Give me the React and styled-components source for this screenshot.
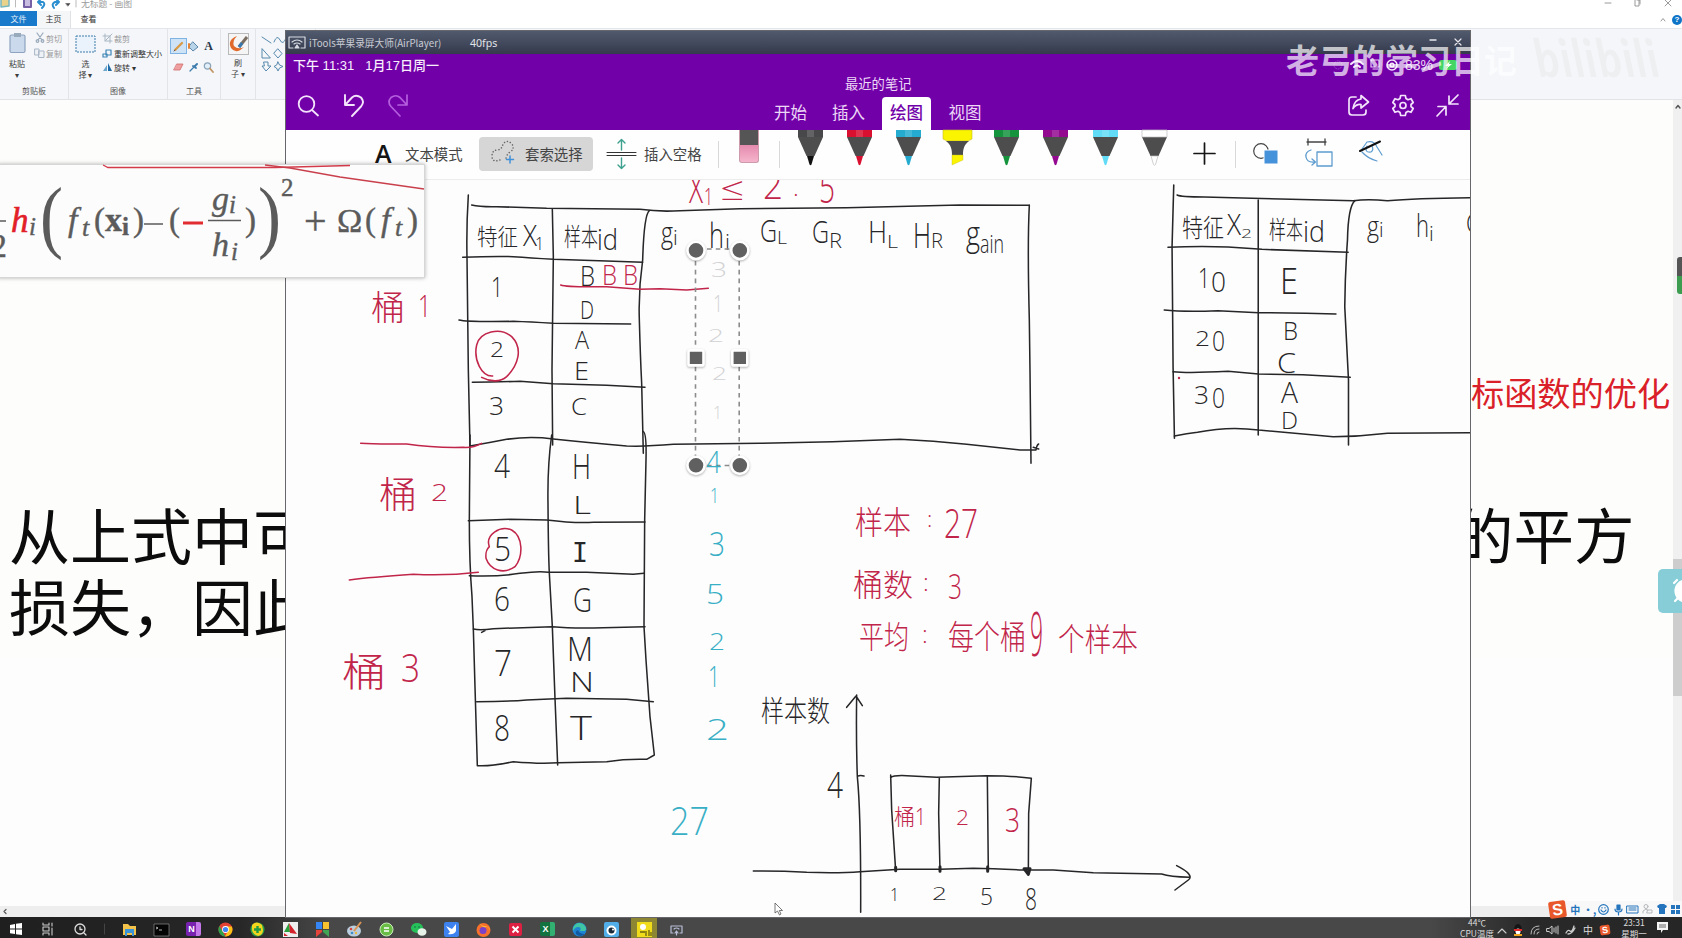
import React from "react";
import styled, { createGlobalStyle } from "styled-components";

const CJK = '"Noto Sans CJK SC", sans-serif';

const Global = createGlobalStyle`
  html, body { margin: 0; padding: 0; }
  body { font-family: "Noto Sans CJK SC", sans-serif; overflow: hidden; }
  * { box-sizing: border-box; }
  svg { display: block; flex: none; overflow: visible; }
`;

/* ---------- desktop shell ---------- */
const Desktop = styled.div`
  position: relative;
  width: 1682px;
  height: 938px;
  overflow: hidden;
  display: flex;
  flex-direction: column;
  background: #fdfdfd;
`;

/* ---------- Paint ---------- */
const PaintTitle = styled.header`
  height: 11px;
  display: flex;
  justify-content: space-between;
  background: #fff;
`;
const QuickAccess = styled.div`
  display: flex;
  align-items: flex-start;
  height: 11px;
`;
const TitleText = styled.span`
  font-size: 8.8px;
  line-height: 9px;
  margin: -1px 0 0 6px;
  color: #9b9b9b;
`;
const TabRow = styled.nav`
  height: 17px;
  display: flex;
  align-items: stretch;
  background: #fff;
`;
const PaintTab = styled.div`
  width: ${(p) => p.$w}px;
  height: ${(p) => (p.$file ? 15 : 17)}px;
  text-align: center;
  font-size: 8px;
  line-height: 16px;
  color: ${(p) => (p.$file ? "#e4f0fb" : "#333")};
  background: ${(p) => (p.$file ? "#1979ca" : p.$active ? "#f5f6f8" : "transparent")};
  border-right: ${(p) => (p.$active ? "1px solid #dfe1e4" : "none")};
`;
const TabTail = styled.div`
  margin-left: auto;
  display: flex;
  align-items: center;
  gap: 6px;
`;
const Help = styled.span`
  width: 10px;
  height: 10px;
  border-radius: 50%;
  background: #0d74c7;
  color: #fff;
  font: bold 8px/10px "Liberation Sans", sans-serif;
  text-align: center;
`;
const Ribbon = styled.section`
  height: 72px;
  display: flex;
  background: #f4f6f9;
  border-top: 1px solid #e3e6ea;
  border-bottom: 1px solid #e1e3e6;
`;
const Group = styled.div`
  width: ${(p) => p.$w}px;
  padding: 4px 0 0 ${(p) => p.$pad || 0}px;
  display: flex;
  flex-direction: column;
  border-right: 1px solid #e2e4e7;
`;
const GroupBody = styled.div`
  display: flex;
  height: 51px;
  gap: ${(p) => p.$gap || 0}px;
`;
const GroupName = styled.div`
  font-size: 8px;
  line-height: 14px;
  text-align: center;
  color: #555;
`;
const BigButton = styled.div`
  width: ${(p) => p.$w}px;
  display: flex;
  flex-direction: column;
  align-items: center;
  font-size: 8px;
  line-height: 11px;
  color: #3d3d3d;
  text-align: center;
  white-space: pre;
  & > svg { margin-bottom: ${(p) => p.$gap || 3}px; }
`;
const SmallList = styled.div`
  display: flex;
  flex-direction: column;
  margin-top: -2px;
`;
const SmallButton = styled.div`
  height: 14.7px;
  display: flex;
  align-items: center;
  gap: 2px;
  font-size: 8px;
  white-space: nowrap;
  color: ${(p) => (p.$off ? "#999" : "#333")};
`;
const ToolGrid = styled.div`
  display: grid;
  grid-template-columns: 15px 15px 15px;
  grid-template-rows: 14px 14px;
  gap: 7px 0;
  padding: 6px 0 0 3px;
`;
const Tool = styled.div`
  display: flex;
  align-items: center;
  justify-content: center;
  font: bold 12px "Liberation Serif", serif;
  color: #26384b;
  background: ${(p) => (p.$on ? "#cfe3f7" : "transparent")};
  outline: ${(p) => (p.$on ? "1px solid #7fb3e3" : "none")};
`;
const PaintBody = styled.main`
  position: relative;
  flex: 1;
  display: flex;
  flex-direction: column;
`;
const PaintRow = styled.div`
  flex: 1;
  display: flex;
  justify-content: flex-end;
`;
const Sheet = styled.div`
  position: relative;
  flex: 1;
  height: 558px;
  background: #fdfdfb;
  overflow: hidden;
`;
const SlideText = styled.p`
  position: absolute;
  left: ${(p) => p.$x}px;
  top: ${(p) => p.$y}px;
  margin: 0;
  font-size: ${(p) => p.$size}px;
  line-height: ${(p) => p.$line}px;
  font-weight: 400;
  color: ${(p) => p.$color || "#0c0c0c"};
  white-space: pre;
`;
const VScroll = styled.div`
  width: 9px;
  background: #f0f0f0;
  display: flex;
  flex-direction: column;
  align-items: flex-end;
`;
const ScrollPart = styled.span`
  width: ${(p) => p.$w}px;
  height: ${(p) => p.$h}px;
  background: ${(p) => p.$bg || "transparent"};
  border-radius: ${(p) => p.$r || 0};
`;
const ScrollArrow = styled.span`
  width: 9px;
  height: 12px;
  display: flex;
  align-items: center;
  justify-content: center;
`;
const HScroll = styled.div`
  height: 11px;
  display: flex;
  align-items: center;
  background: #eeeeee;
  padding-left: 3px;
`;
const Reminder = styled.div`
  position: absolute;
  left: 1658px;
  top: 569px;
  width: 24px;
  height: 44px;
  background: #87cdd8;
  border-radius: 5px 0 0 5px;
  overflow: hidden;
  padding: 10px 0 0 15px;
`;

/* ---------- AirPlayer window ---------- */
const Player = styled.section`
  position: absolute;
  left: 286px;
  top: 31px;
  width: 1184px;
  height: 886px;
  display: flex;
  flex-direction: column;
  background: #fdfdfd;
  box-shadow: 0 0 0 1px #66666b;
  overflow: hidden;
`;
const PlayerBar = styled.header`
  height: 23px;
  display: flex;
  align-items: center;
  background: linear-gradient(#515a6e, #353a4c);
  color: #c9ccd4;
  padding: 0 9px 0 2px;
`;
const PlayerName = styled.span`
  margin-left: 3px;
  width: 155px;
  white-space: nowrap;
  font-size: 9.7px;
`;
const Fps = styled.span`
  font: 10.6px "Noto Sans", sans-serif;
  margin-left: 6px;
  color: #e0e2e7;
`;
const WinButtons = styled.div`
  margin-left: auto;
  display: flex;
  align-items: center;
  gap: 19px;
`;
const NoteHead = styled.div`
  height: 76px;
  background: #7200a9;
  color: #ecd8f6;
  display: flex;
  flex-direction: column;
`;
const StatusRow = styled.div`
  height: 22px;
  display: flex;
  align-items: center;
  justify-content: space-between;
  padding: 0 13px 2px 7px;
  font-size: 13px;
  font-weight: 700;
  color: #ecd9f6;
`;
const StatusTime = styled.div`
  display: flex;
  gap: 11px;
  font-family: "Liberation Sans", ${CJK};
  font-weight: 500;
  color: #f8effc;
  & > span { white-space: nowrap; }
`;
const StatusIcons = styled.div`
  display: flex;
  align-items: center;
  gap: 6px;
  padding-top: 1px;
  font: 14px "Liberation Sans", sans-serif;
`;
const NavRow = styled.div`
  height: 54px;
  display: grid;
  grid-template-columns: 475px 1fr 136px;
`;
const NavLeft = styled.div`
  display: flex;
  align-items: flex-start;
  padding: 17px 0 0 11px;
  gap: 24.5px;
`;
const NavMid = styled.div`
  display: flex;
  flex-direction: column;
`;
const NoteTitle = styled.div`
  font-size: 13.3px;
  line-height: 16px;
  height: 21px;
  padding-left: 84px;
`;
const Tabs = styled.div`
  display: flex;
  padding-left: 3px;
`;
const NoteTab = styled.div`
  width: ${(p) => p.$w}px;
  height: 33px;
  margin-right: ${(p) => p.$after || 0}px;
  text-align: center;
  font-size: 16.5px;
  line-height: 31px;
  border-radius: 4px 4px 0 0;
  font-weight: ${(p) => (p.$active ? 500 : 400)};
  color: ${(p) => (p.$active ? "#7200a9" : "#ecd8f6")};
  background: ${(p) => (p.$active ? "#fff" : "transparent")};
`;
const NavRight = styled.div`
  display: flex;
  align-items: flex-start;
  gap: 22px;
  padding: 18px 0 0 14px;
`;
const DrawBar = styled.div`
  height: 50px;
  display: flex;
  align-items: flex-start;
  background: #fefefe;
  border-bottom: 1px solid #ececec;
  font-size: 14.4px;
  color: #444;
`;
const Mode = styled.div`
  height: 34px;
  margin: 7px 0 0 ${(p) => p.$before || 0}px;
  width: ${(p) => p.$w}px;
  padding: 0 0 2px ${(p) => p.$pad || 0}px;
  display: flex;
  align-items: center;
  gap: ${(p) => p.$gap}px;
  border-radius: 4px;
  white-space: nowrap;
  background: ${(p) => (p.$on ? "#d6d6d6" : "transparent")};
`;
const LetterA = styled.span`
  font: 600 25px/30px "Open Sans", sans-serif;
  color: #151515;
  width: 18px;
`;
const Divider = styled.span`
  width: 1px;
  height: 27px;
  margin: 11px ${(p) => p.$after}px 0 ${(p) => p.$before}px;
  background: #d9d9d9;
`;
const Eraser = styled.div`
  width: 20px;
  height: 33px;
  border-radius: 0 0 3px 3px;
  border: 1px solid #cc9aab;
  border-top: 0;
  background: linear-gradient(#555 0 15px, #e58aad 15px, #f5b5cc 100%);
`;
const Pens = styled.div`
  display: flex;
  gap: 24.2px;
`;
const Actions = styled.div`
  display: flex;
  padding-top: 9px;
  gap: 26px;
`;
const Page = styled.div`
  flex: 1;
  overflow: hidden;
  & > svg { overflow: hidden; }
`;

/* ---------- formula window ---------- */
const FormulaWindow = styled.section`
  position: absolute;
  left: -2px;
  top: 164px;
  width: 427px;
  height: 114px;
  padding-left: 2px;
  background: #fcfcfc;
  border: 1px solid #d6d6d6;
  border-left: 0;
  box-shadow: 0 0 4px rgba(0, 0, 0, 0.3);
`;

/* ---------- overlays ---------- */
const Watermark = styled.div`
  position: absolute;
  left: 1286px;
  top: 34px;
  display: flex;
  align-items: flex-start;
  gap: 17px;
  font-size: 33px;
  line-height: 50px;
  font-weight: 700;
  color: rgba(255, 255, 255, 0.7);
  white-space: nowrap;
`;
const Bili = styled.span`
  font: italic 700 44px/46px "Lato", sans-serif;
  transform: skewX(17deg) scaleY(1.2);
  letter-spacing: 1.6px;
  color: #eeeff1;
`;
const Ime = styled.div`
  position: absolute;
  left: 1549px;
  top: 901px;
  width: 133px;
  height: 16px;
  background: #f8f8f8;
  display: flex;
  align-items: center;
  color: #2474bd;
  font-size: 10px;
  font-weight: 700;
`;
const Sogou = styled.span`
  width: ${(p) => p.$s}px;
  height: ${(p) => p.$s}px;
  margin-right: ${(p) => p.$after || 0}px;
  flex: none;
  border-radius: 2px;
  background: #e9582b;
  color: #fff;
  font: bold ${(p) => p.$s - 1}px/${(p) => p.$s}px "Liberation Sans", sans-serif;
  text-align: center;
  transform: rotate(-8deg);
`;
const ImeCell = styled.span`
  width: 14.4px;
  flex: none;
  display: flex;
  justify-content: center;
  align-items: center;
  white-space: nowrap;
`;

/* ---------- taskbar ---------- */
const Taskbar = styled.footer`
  position: relative;
  height: 21px;
  display: flex;
  background: linear-gradient(90deg, #1f1f1f 0, #272727 240px, #484848 330px, #484848 1430px, #292929 1530px, #262626);
  color: #ddd;
  overflow: hidden;
`;
const TaskCell = styled.div`
  width: ${(p) => p.$w || 32.2}px;
  display: flex;
  justify-content: center;
  align-items: center;
  padding-top: 3px;
  background: ${(p) => (p.$hot ? "linear-gradient(90deg,transparent 3px,#8d8632 3px 29px,transparent 29px)" : "none")};
`;
const Tray = styled.div`
  margin-left: auto;
  display: flex;
  align-items: center;
  padding-right: 14px;
`;
const TrayText = styled.div`
  width: ${(p) => p.$w}px;
  margin-right: ${(p) => p.$after || 0}px;
  height: 21px;
  font-size: 8.5px;
  line-height: 11px;
  text-align: center;
  white-space: nowrap;
`;
const TrayIcons = styled.div`
  display: flex;
  align-items: center;
  gap: 7px;
  padding: 5px 8px 0 3px;
  font-size: 10px;
  line-height: 12px;
`;

/* ---------- small drawings ---------- */
const Line = ({ w = 20, h = 20, box, c = "currentColor", sw = 1.6, children }) => (
  <svg width={w} height={h} viewBox={box || `0 0 ${w} ${h}`} fill="none" stroke={c} strokeWidth={sw} strokeLinecap="round" strokeLinejoin="round">
    {children}
  </svg>
);

const Pen = ({ color, marker, edge, tip }) => (
  <svg width="25" height="36" viewBox="0 0 25 36">
    {marker ? (
      <>
        <path d="M-2 0H27V9L23 11H2L-2 9Z" fill="#fbf400" stroke="#c6bd2a" strokeWidth=".6" />
        <path d="M1 11H24C19 15 18 19 18 25H7C7 19 6 15 1 11Z" fill="#4c4c4c" />
        <path d="M7 25H18V30L7 35Z" fill="#fbf400" stroke="#c6bd2a" strokeWidth=".4" />
      </>
    ) : (
      <>
        <path d="M0 0H25V7L16.5 26H8.500L0 7Z" fill="#4d4d4d" />
        <path d="M0 0H25V7H0Z" fill={color} stroke={edge || "none"} strokeWidth=".7" />
        <path d="M9 0H16V7H9Z" fill="#fff" opacity=".15" />
        <path d="M9 26H16L13.500 34.500Q12.500 36 11.500 34.500Z" fill={tip || color} stroke={edge || "none"} strokeWidth=".7" />
      </>
    )}
  </svg>
);

/* ---------- handwritten notes ---------- */
const BLACK = "#262628";
const RED = "#c1254a";
const CYAN = "#39afc6";
const GREY = "#d2d2d4";

const Hand = styled.text`
  font-family: ${(p) => (p.$serif ? '"DejaVu Sans Mono", monospace' : '"Open Sans", "Noto Sans CJK SC", sans-serif')};
  font-weight: 300;
`;
const Note = ({ d, c = BLACK }) => {
  const [t, x, y, s, len, serif] = d;
  return (
    <Hand x={x} y={y} fontSize={s} fill={c} $serif={serif} textLength={len || undefined} lengthAdjust={len ? "spacingAndGlyphs" : undefined}>
      {t}
    </Hand>
  );
};

/* text, x, baseline, size, width */
const blackNotes = [
  ["特征", 477, 245, 23, 41], ["X", 523, 246, 30, 14], ["1", 535, 250, 18, 9],
  ["样本", 564, 246, 25, 34], ["id", 597, 250, 29, 21],
  ["g", 661, 243, 30, 12], ["i", 673, 245, 21], ["h", 709, 248, 35, 15], ["i", 725, 250, 22],
  ["G", 760, 242, 31, 17], ["L", 777, 244, 18, 10], ["G", 812, 243, 31, 17], ["R", 829, 248, 20, 13],
  ["H", 868, 243, 31, 19], ["L", 887, 248, 18, 11], ["H", 913, 248, 34, 18], ["R", 931, 248, 21, 12],
  ["g", 966, 246, 34, 14], ["ain", 980, 253, 25, 24],
  ["1", 491, 297, 27, 12], ["B", 580, 286, 27, 15], ["D", 580, 319, 26, 14],
  ["2", 490, 357, 21, 14], ["A", 575, 349, 25, 14], ["E", 574, 380, 25, 15],
  ["3", 489, 415, 26, 15], ["C", 571, 415, 24, 16], ["4", 494, 478, 33, 16], ["H", 572, 479, 34, 19],
  ["L", 573, 514, 26, 18], ["5", 494, 561, 33, 17], ["I", 572, 562, 27, 16, true],
  ["6", 494, 611, 33, 16], ["G", 573, 612, 33, 19], ["7", 494, 676, 36, 18],
  ["M", 567, 661, 33, 26], ["N", 570, 692, 28, 24], ["8", 494, 741, 36, 16], ["T", 570, 740, 33, 22],
  ["样本数", 761, 722, 29, 69], ["4", 827, 798, 37, 16],
  ["1", 890, 901, 18, 9], ["2", 932, 900, 18, 15], ["5", 980, 905, 24, 13], ["8", 1025, 910, 31, 12],
  ["特征", 1182, 237, 25, 42], ["X", 1227, 235, 30, 14], ["2", 1241, 238, 12, 11],
  ["样本", 1269, 239, 25, 34], ["id", 1303, 242, 29, 22],
  ["g", 1367, 236, 28, 12], ["i", 1379, 237, 20], ["h", 1416, 237, 31, 13], ["i", 1429, 241, 21],
  ["G", 1466, 233, 28, 16], ["1", 1198, 288, 28, 12], ["0", 1211, 292, 28, 15], ["E", 1280, 294, 36, 18],
  ["2", 1195, 346, 21, 15], ["0", 1212, 351, 28, 13], ["B", 1283, 340, 25, 15], ["C", 1277, 373, 28, 19],
  ["3", 1194, 404, 26, 15], ["0", 1212, 408, 28, 13], ["A", 1281, 403, 29, 17], ["D", 1281, 429, 24, 17],
];
const redNotes = [
  ["X", 689, 203, 40, 14], ["1", 704, 205, 24, 9], ["≤", 720, 200, 32, 24], ["2", 763, 199, 38, 20],
  [".", 793, 196, 24], ["5", 819, 203, 42, 16],
  ["B", 602, 285, 27, 15], ["B", 623, 285, 27, 15],
  ["桶", 371, 320, 34, 34], ["1", 418, 317, 32, 13], ["桶", 379, 508, 36, 38], ["2", 431, 501, 24, 17],
  ["桶", 342, 686, 39, 44], ["3", 401, 682, 38, 19],
  ["样本", 855, 534, 32, 56], [":", 927, 527, 22], ["27", 944, 538, 41, 34],
  ["桶数", 853, 596, 31, 60], [":", 923, 591, 24], ["3", 948, 599, 34, 14],
  ["平均", 859, 648, 31, 50], [":", 922, 643, 24], ["每个桶", 948, 649, 33, 78], ["9", 1030, 656, 60, 13],
  ["个样本", 1058, 651, 32, 80],
  ["桶", 894, 825, 22, 21], ["1", 915, 825, 23, 11], ["2", 956, 825, 20, 13], ["3", 1005, 832, 33, 15],
];
const cyanNotes = [
  ["4", 706, 473, 32, 15], ["1", 710, 503, 20, 9], ["3", 709, 556, 33, 16], ["5", 706, 604, 28, 18],
  ["2", 709, 650, 24, 16], ["1", 708, 687, 29, 12], ["2", 706, 740, 30, 23], ["27", 670, 835, 38, 39],
];
const greyNotes = [
  ["3", 711, 277, 20, 16], ["1", 713, 312, 23, 10], ["2", 708, 342, 18, 16], ["2", 712, 380, 18, 15], ["1", 713, 419, 18, 9],
];

const Notebook = () => (
  <svg width="1185" height="737" viewBox="286 180 1185 737">
    <g fill="none" stroke={BLACK} strokeWidth="4.6" strokeLinecap="round" strokeLinejoin="round">
      <g transform="translate(340 170) scale(.33333)">
        <path d="M385 75Q379 170 381 262L385 600L390 830" />
        <path d="M637 118L640 260L636 600L638 825" />
        <path d="M928 122Q912 135 908 270Q895 360 898 450Q901 560 905 640L910 850" />
        <path d="M395 105Q420 111 470 110L620 115L900 118Q960 126 1020 122L1200 116L1520 113L1860 105L2068 106" />
        <path d="M2068 106Q2062 220 2068 450L2070 600L2073 880" />
        <path d="M390 828Q450 818 500 808Q570 798 640 807Q740 818 860 828Q920 830 1000 823L1260 820Q1480 817 1680 808Q1780 812 1880 823L2040 840H2088Q2090 825 2096 822M2080 832L2096 837" />
        <path d="M368 262Q460 258 520 260Q570 263 640 268L800 273L908 277" />
        <path d="M357 450Q380 456 520 454Q570 456 640 460L872 462" />
        <path d="M397 637Q460 636 540 634L640 641L800 646L915 652" />
      </g>
      <g transform="translate(340 420) scale(.33333)">
        <path d="M390 45L388 300Q388 430 396 530L400 627L405 800L412 1037Q450 1040 520 1025Q600 1032 655 1028L800 1025Q860 1016 920 1018L943 1005L930 890L918 720L912 620L914 300L918 120Q920 40 910 35" />
        <path d="M635 45Q622 140 624 250Q625 400 628 460L637 620L645 835L653 1035" />
        <path d="M385 302L510 298L620 300Q700 310 760 307L915 306" />
        <path d="M388 467Q480 470 540 460Q600 452 625 457L740 457L880 463L912 460" />
        <path d="M400 627Q420 632 460 626L637 620Q700 626 790 623L915 620M425 637L435 632" />
        <path d="M410 845Q500 845 560 840L680 835L860 838L940 845" />
      </g>
      <g transform="translate(740 480) scale(.33333)">
        <path d="M350 645Q348 780 352 890Q363 1000 362 1297M320 682L348 648L367 677M352 889Q360 885 372 888" />
        <path d="M40 1173Q120 1172 200 1177Q300 1180 360 1175L480 1168L600 1168L700 1165Q760 1166 850 1170L940 1170L1060 1178L1265 1182Q1290 1190 1348 1192M1310 1157Q1365 1185 1345 1200L1305 1230" />
        <path d="M452 885L455 990L467 1172M452 893Q460 885 500 887L590 892L740 887Q820 887 874 895M598 892L596 1000L600 1172M742 887L745 1172M874 895L866 1000L865 1185" />
        <path d="M467 1162V1172M600 1160V1174M743 1160V1174M852 1166L865 1183L870 1166Z" strokeWidth="9" />
      </g>
      <g transform="translate(1150 180) scale(.3393 .33333)">
        <path d="M70 15L65 200L68 560L72 775M80 45Q90 51 160 51L300 55L600 62Q640 56 700 62Q780 55 945 53" />
        <path d="M319 60V765M604 62Q584 80 582 180Q575 280 574 380L585 600V795" />
        <path d="M53 202Q140 198 230 201L330 208L584 217M42 390Q100 396 200 392L320 398L460 400L548 402M68 575Q110 580 230 574L320 582L450 584L590 592" />
        <path d="M72 768Q110 760 140 757Q230 738 320 750L540 770Q620 770 700 760L945 758" />
      </g>
      <g transform="translate(340 170) scale(.33333)" stroke={RED}>
        <path d="M62 820Q100 823 200 822Q280 834 370 832Q400 834 425 820" />
        <path d="M28 1230Q90 1222 220 1213Q320 1218 415 1207" />
        <path d="M662 345Q680 352 800 350L900 358L960 356L1040 360L1105 355" />
        <path d="M458 618C425 620 400 570 410 525C420 485 480 470 515 500C550 535 535 585 500 620C480 638 450 635 425 622" />
        <path d="M448 1130C435 1095 480 1065 515 1080C550 1100 550 1160 525 1190C490 1215 450 1200 438 1165C436 1145 440 1138 448 1130Z" />
      </g>
    </g>
    <circle cx="1179" cy="378" r="1.200" fill={RED} />
    {blackNotes.map((d, i) => <Note key={i} d={d} />)}
    {redNotes.map((d, i) => <Note key={i} d={d} c={RED} />)}
    {greyNotes.map((d, i) => <Note key={i} d={d} c={GREY} />)}
    <g stroke="#8c8c8c" strokeWidth="1.600" strokeDasharray="4.600 4.200">
      <path d="M695.500 261V457M739.200 261V457M707 249H731M707 465.500H731" />
    </g>
    {cyanNotes.map((d, i) => <Note key={i} d={d} c={CYAN} />)}
    <g fill="#606060" stroke="#fff" strokeWidth="2.600" filter="drop-shadow(0 1px 1px rgba(0,0,0,.3))">
      {[696, 739.8].map((x) => (
        <g key={x}>
          <circle cx={x} cy="250.400" r="8.600" />
          <circle cx={x} cy="465.300" r="8.600" />
          <rect x={x - 7.5} y="350.400" width="15" height="15" rx="1.500" />
        </g>
      ))}
    </g>
    <path d="M775 903V913L777.500 911L779.500 915L781 914L779.300 910.500H782.500Z" fill="#fff" stroke="#555" strokeWidth=".8" />
  </svg>
);

/* ---------- formula ---------- */
const MathText = styled.text`
  font-family: "Liberation Serif", serif;
  font-style: ${(p) => (p.$up ? "normal" : "italic")};
  font-weight: ${(p) => (p.$bold ? 700 : 400)};
`;
const mathParts = [
  ["2", -10, 257, 34, true], ["i", 29, 235, 25], ["f", 68, 231, 34], ["t", 82, 236, 26],
  ["(", 94, 231, 33, true], ["x", 105, 231, 34, true, true], ["i", 122, 235, 25, true, true], [")", 133, 231, 33, true],
  ["(", 169, 231, 33, true], ["g", 212, 210, 34], ["i", 229, 213, 25], ["h", 212, 256, 34], ["i", 231, 260, 25],
  [")", 245, 231, 33, true], ["2", 281, 196, 25, true], ["+", 304, 234, 40, true], ["Ω", 337, 232, 34, true],
  ["(", 365, 231, 33, true], ["f", 381, 231, 34], ["t", 395, 236, 26], [")", 407, 231, 33, true],
];
const Formula = () => (
  <svg width="424" height="112" viewBox="0 165 424 112">
    <g fill="#5b5b5b">
      {mathParts.map(([t, x, y, s, up, bold], i) => (
        <MathText key={i} x={x} y={y} fontSize={s} $up={up} $bold={bold} stroke="#5b5b5b" strokeWidth=".4">{t}</MathText>
      ))}
      <MathText x="40" y="243" fontSize="80" textLength="23" lengthAdjust="spacingAndGlyphs" $up>(</MathText>
      <MathText x="258" y="243" fontSize="80" textLength="23" lengthAdjust="spacingAndGlyphs" $up>)</MathText>
      <MathText x="11" y="232" fontSize="35" fill="#e22028" stroke="#e22028" strokeWidth=".6">h</MathText>
    </g>
    <path d="M0 221H6M144 224H163M208 220.500H241" stroke="#5b5b5b" strokeWidth="1.700" />
    <path d="M183 223H203" stroke="#e22d30" strokeWidth="3" />
    <path d="M103 165L108 167.500H275L350 165.500" stroke="#d23a4a" strokeWidth="1.300" fill="none" />
    <path d="M265 165L290 168L340 177L424 189" stroke="#c9404c" strokeWidth="1.400" fill="none" />
  </svg>
);

/* ---------- taskbar icons ---------- */
const Badge = styled.span`
  width: ${(p) => p.$w || 14}px;
  height: 14px;
  border-radius: 2px;
  background: ${(p) => p.$bg};
  color: #fff;
  font: bold 9px/14px "Liberation Sans", sans-serif;
  text-align: center;
  padding-right: 4px;
`;
const I = ({ children }) => <svg width="15" height="15" viewBox="0 0 15 15">{children}</svg>;
const taskIcons = [
  <I key="e"><path d="M1 2H6L8 4H14V13H1Z" fill="#f3c24a" /><path d="M3 7H12V14H10V11H5V14H3Z" fill="#3b93d8" /></I>,
  <I key="t"><path d="M0 2H15V14H0Z" fill="#050505" stroke="#8b8b8b" strokeWidth=".7" /><path d="M2 5L4 6L2 7M5 8H8" stroke="#ddd" fill="none" strokeWidth=".8" /></I>,
  <Badge key="n" $bg="linear-gradient(90deg,#7a22b0 65%,#c377e8 65%)" $w="15">N</Badge>,
  <I key="c"><circle cx="7.500" cy="7.500" r="7" fill="#e34133" /><path d="M1.400 4L7.500 14.500A7 7 0 0 1 1.400 4Z" fill="#2ba24c" /><path d="M7.500 4.500H13.800A7 7 0 0 1 7 14.500L10 9Z" fill="#fbc116" /><circle cx="7.500" cy="7.500" r="3.400" fill="#fff" /><circle cx="7.500" cy="7.500" r="2.600" fill="#4184f3" /></I>,
  <I key="p"><circle cx="7.500" cy="7.500" r="7" fill="#2ea449" /><path d="M2 3Q7 -2 12 3L13 8Q13 13 8 14Q2 12 2 7Z" fill="#f4d51d" /><path d="M7.500 4V11M4 7.500H11" stroke="#239942" strokeWidth="2.400" /></I>,
  <I key="r"><path d="M0 0H15V15H0Z" fill="#eee" /><path d="M1 10L6 1L7 10Z" fill="#29a03b" /><path d="M6 1L14 12L7 11Z" fill="#d5232b" /><path d="M1 11L5 14H1Z" fill="#d5232b" /></I>,
  <I key="m"><path d="M1 0H7V7H1Z" fill="#3685f5" /><path d="M8 0H14V7H8Z" fill="#f7c22e" /><path d="M1 8H7V10L1 15Z" fill="#e4443a" /><path d="M8 8H14V15L8 10Z" fill="#3fa655" /></I>,
  <I key="a"><ellipse cx="7" cy="9" rx="7" ry="5.500" fill="#b9cfdf" /><path d="M14 0L7 9" stroke="#d89455" strokeWidth="2" /><circle cx="4" cy="7" r="1.300" fill="#d4463e" /><circle cx="5" cy="11" r="1.300" fill="#3e8ecc" /><circle cx="9" cy="11" r="1.200" fill="#e9b93c" /></I>,
  <I key="g"><circle cx="7.500" cy="7.500" r="6.500" fill="#69bd45" stroke="#caeebb" /><path d="M5 6H10M5 9H10" stroke="#fff" strokeWidth="1.500" /></I>,
  <I key="w"><ellipse cx="6" cy="6" rx="6" ry="5" fill="#27c15a" /><ellipse cx="11" cy="10" rx="4.500" ry="3.800" fill="#e7f2e9" /><circle cx="4" cy="5" r=".8" fill="#164" /><circle cx="8" cy="5" r=".8" fill="#164" /></I>,
  <I key="b"><rect width="15" height="15" rx="2" fill="#3d82ee" /><path d="M2 4L8 7L12 2V9Q10 13 4 12L6 10Z" fill="#fff" /></I>,
  <I key="f"><circle cx="7.500" cy="8" r="7" fill="#f7702c" /><path d="M3 1L7 4Q14 4 14 9Q12 3 8 6Z" fill="#fbc33c" /><circle cx="7" cy="8.500" r="3.500" fill="#7b41c9" /></I>,
  <I key="x"><rect x="1" y="1" width="13" height="13" rx="2" fill="#de2142" /><path d="M4.500 4.500L10.500 10.500M10.500 4.500L4.500 10.500" stroke="#fff" strokeWidth="2" /></I>,
  <Badge key="xl" $bg="linear-gradient(90deg,#127240 65%,#31b072 65%)" $w="15">X</Badge>,
  <I key="ed"><circle cx="7.500" cy="7.500" r="7" fill="#2084d4" /><path d="M1 6Q4 -1 11 2Q16 6 13 9H8Q10 5 6 5Q3 5 1 9Z" fill="#3fc5a3" /><path d="M6 8Q7 12 13 12Q8 16 4 12Q3 9 6 8Z" fill="#125a9f" /></I>,
  <I key="ca"><rect width="15" height="15" rx="2" fill="#52aee9" /><circle cx="7.500" cy="8.500" r="5" fill="#fff" /><circle cx="7.500" cy="8.500" r="3" fill="#1a2a38" /><circle cx="9" cy="7.500" r="1" fill="#fff" /></I>,
  <I key="y"><rect width="15" height="15" fill="#f1dc1c" /><circle cx="6" cy="5" r="3" fill="#fff" /><path d="M3 10H8M9 14V9M12 14V8M14 14V10" stroke="#6a6212" strokeWidth="1.300" /></I>,
  <Line key="air" w={13} h={13} c="#b7bdd6" sw={1.2}><path d="M3 10H1V3H12V10H10M4 6Q6.500 4 9 6M6.500 8V12M5 10L6.500 8L8 10" /></Line>,
];

const penList = [
  { color: "#48484a", tip: "#111" }, { color: "#d9102f" }, { color: "#25abd0" }, { marker: true },
  { color: "#15923c" }, { color: "#930a91" }, { color: "#62dcf6" }, { color: "#fff", edge: "#bbb" },
];

export default function App() {
  return (
    <Desktop>
      <Global />
      <PaintTitle>
        <QuickAccess>
          <Line w={75} h={11} sw={1.5}>
            <path d="M1 0V7L9 6V0" stroke="#76b7c2" fill="#e9d38c" />
            <path d="M15.500 0V7M76 0V7" stroke="#bbb" strokeWidth="1" />
            <path d="M24 0V7H31V0" stroke="#7660a5" fill="#c8bde0" strokeWidth="2" />
            <path d="M39 2H43Q46 4 42 8M41 -1L38 2L41 5M59 2H55Q51 4 54 8M56 -1L59 2L56 5" stroke="#2c8fd0" strokeWidth="2" />
            <path d="M66 3.500H70L68 6Z" fill="#444" stroke="#444" strokeWidth=".5" />
          </Line>
          <TitleText>无标题 - 画图</TitleText>
        </QuickAccess>
        <Line w={84} h={11} c="#8f8f8f" sw={0.9}>
          <path d="M7 3H13M37 0V6H41V0M39 0H42V4M67 0L73 6M73 0L67 6" />
        </Line>
      </PaintTitle>
      <TabRow>
        <PaintTab $w={37} $file>文件</PaintTab>
        <PaintTab $w={34} $active>主页</PaintTab>
        <PaintTab $w={35}>查看</PaintTab>
        <TabTail>
          <Line w={6} h={5} c="#999" sw={1}><path d="M1 4L3 1.500L5 4" /></Line>
          <Help>?</Help>
        </TabTail>
      </TabRow>
      <Ribbon>
        <Group $w={69}>
          <GroupBody $gap={1}>
            <BigButton $w={34} $gap={5}>
              <svg width="17" height="20" viewBox="0 0 17 20"><rect x="1" y="2" width="15" height="17.500" rx="1.500" fill="#cbd9ec" stroke="#8ea3bf" strokeWidth="1.200" /><path d="M5 0H12V4H5Z" fill="#9aaabd" /></svg>
              {"粘贴\n▾"}
            </BigButton>
            <SmallList>
              <SmallButton $off>
                <Line w={9} h={10} c="#98a9bb" sw={1.2}><path d="M2 0L7 7M8 0L3 7" /><circle cx="2.500" cy="8" r="1.300" /><circle cx="7.500" cy="8" r="1.300" /></Line>剪切
              </SmallButton>
              <SmallButton $off>
                <Line w={9} h={10} c="#a9b6c4" sw={1}><path d="M0 1H4V7H0ZM4 3H9V9.500H4Z" fill="#eef2f6" /></Line>复制
              </SmallButton>
            </SmallList>
          </GroupBody>
          <GroupName>剪贴板</GroupName>
        </Group>
        <Group $w={99}>
          <GroupBody $gap={1}>
            <BigButton $w={33} $gap={5}>
              <svg width="21" height="20" viewBox="0 0 21 20"><rect x="1" y="3" width="19" height="16" fill="#eaf2fb" stroke="#3d7dab" strokeDasharray="2 1" /></svg>
              {"选\n择 ▾"}
            </BigButton>
            <SmallList>
              <SmallButton $off><Line w={9} h={9} c="#a9b6c4" sw={1}><path d="M2 0V7H9M0 2H7V9M2 7L9 0" /></Line>裁剪</SmallButton>
              <SmallButton><Line w={9} h={9} c="#3c86b7" sw={1.2}><path d="M3 1H8V6H3ZM0 5H4V8H0Z" /></Line>重新调整大小</SmallButton>
              <SmallButton><svg width="9" height="9" viewBox="0 0 9 9"><path d="M0 8H4V2Z" fill="#6ba6cf" /><path d="M5 0L9 8H5Z" fill="#1f6ba6" /></svg>旋转 ▾</SmallButton>
            </SmallList>
          </GroupBody>
          <GroupName>图像</GroupName>
        </Group>
        <Group $w={53}>
          <GroupBody>
            <ToolGrid>
              <Tool $on><Line w={11} h={11} sw={2.3} c="#d99b46"><path d="M2 9L9 2" /><path d="M1 10L2 9" stroke="#555" strokeWidth="1" /></Line></Tool>
              <Tool><Line w={11} h={11} c="#5c87ab" sw={1}><path d="M5 1L10 6L5 10L1 6Z" fill="#b8d4e8" /><path d="M1 3V7" stroke="#e08439" strokeWidth="2" /></Line></Tool>
              <Tool>A</Tool>
              <Tool><Line w={11} h={9} c="#d16c6c" sw={0.8}><path d="M4 1L10 1L7 7H1Z" fill="#ef9f9f" /></Line></Tool>
              <Tool><Line w={11} h={11} c="#3f7eae" sw={2}><path d="M2 9L6 5" strokeWidth="1.200" /><path d="M5 4L8 6M7 4L9 2" /></Line></Tool>
              <Tool><Line w={11} h={11} c="#8ba4ba" sw={1.2}><circle cx="4.500" cy="4" r="3.200" fill="#e0effa" /><path d="M7 6.500L10 10" stroke="#c19462" strokeWidth="1.800" /></Line></Tool>
            </ToolGrid>
          </GroupBody>
          <GroupName>工具</GroupName>
        </Group>
        <Group $w={35}>
          <GroupBody>
            <BigButton $w={34} $gap={2}>
              <svg width="21" height="22" viewBox="0 0 21 22"><rect x=".5" y=".5" width="20" height="21" fill="#f5f5f5" stroke="#b9b9b9" /><path d="M9 3Q-1 7 3 15Q8 22 16 14Q10 17 6 13Q4 8 9 3Z" fill="#e06a2b" /><path d="M11 14L19 4" stroke="#7a6d61" strokeWidth="3" /><path d="M11 14L14 10" stroke="#3a78ad" strokeWidth="3" /></svg>
              {"刷\n子 ▾"}
            </BigButton>
          </GroupBody>
        </Group>
        <Group $w={60} $pad={4}>
          <Line w={30} h={40} c="#5689ad" sw={1}>
            <path d="M2 4L11 10M14 9Q17 1 20 7T26 5M2 16V25H10ZM18 16L22 20.500L18 25L14 20.500ZM4 29H8V33H11L6 38L2 33H4ZM18 29L19.500 32L23 33.500L19.500 35L18 38L16.500 35L14 33.500L16.500 32Z" />
          </Line>
        </Group>
      </Ribbon>
      <PaintBody>
        <PaintRow>
          <Sheet>
            <SlideText $x={9} $y={398} $size={61} $line={71}>{"从上式中可\n损失，因此"}</SlideText>
            <SlideText $x={1471} $y={269} $size={33.2} $line={45} $color="#da2028">标函数的优化</SlideText>
            <SlideText $x={1453} $y={397} $size={60.5} $line={72}>的平方</SlideText>
          </Sheet>
          <VScroll>
            <ScrollArrow><Line w={6} h={5} c="#555" sw={1.4}><path d="M1 4L3 1.500L5 4" /></Line></ScrollArrow>
            <ScrollPart $w={9} $h={145} />
            <ScrollPart $w={5} $h={19} $bg="#555" $r="3px 0 0 0" />
            <ScrollPart $w={5} $h={18} $bg="#3c9c50" $r="0 0 0 3px" />
            <ScrollPart $w={9} $h={265} />
            <ScrollPart $w={9} $h={137} $bg="#cdcdcd" />
          </VScroll>
        </PaintRow>
        <HScroll><Line w={4} h={5} c="#555" sw={1.2}><path d="M3 .5L1 2.500L3 4.500" /></Line></HScroll>
      </PaintBody>
      <Taskbar>
        <TaskCell><svg width="12" height="12" viewBox="0 0 12 12"><path d="M0 2L5 1V5.500H0ZM6 .8L12 0V5.500H6ZM0 6.500H5V11L0 10.200ZM6 6.500H12V12L6 11.200Z" fill="#fff" /></svg></TaskCell>
        <TaskCell><Line w={12} h={12} c="#ccc" sw={1.1}><path d="M1 0V2H7V0M1 4H7V8H1ZM1 12V10H7V12M10 0V3M10 5V12" /></Line></TaskCell>
        <TaskCell><Line w={13} h={13} c="#ddd" sw={1.3}><circle cx="6" cy="6" r="5" /><path d="M6 4V6.500H8M10 10L12 12" /></Line></TaskCell>
        <TaskCell $w={16.5}><Line w={1} h={10} c="#444" sw={1}><path d="M.5 0V10" /></Line></TaskCell>
        {taskIcons.map((icon, i) => <TaskCell key={i} $hot={i === 16}>{icon}</TaskCell>)}
        <Tray>
          <TrayText $w={36}>44℃<br />CPU温度</TrayText>
          <TrayIcons>
            <Line w={8} h={5} c="#ccc" sw={1.1}><path d="M0 5L4 1L8 5" /></Line>
            <svg width="10" height="12" viewBox="0 0 10 12"><ellipse cx="5" cy="6" rx="4" ry="6" fill="#151515" /><ellipse cx="5" cy="7.500" rx="2.500" ry="3" fill="#fff" /><path d="M1 5H9V7H1Z" fill="#e32b2b" /><path d="M1 11H9" stroke="#efa51f" strokeWidth="2" /></svg>
            <Line w={10} h={10} c="#bbb" sw={1}><path d="M1 9Q1 1 9 1M4 9Q4 4 9 4M7 9Q7 7 9 7" /></Line>
            <Line w={11} h={10} c="#ccc" sw={1}><path d="M0 3.500H2L5 1V9L2 6.500H0ZM7 3V7M9 2V8M11 1V9" /></Line>
            <Line w={11} h={10} c="#ccc" sw={1.3}><path d="M1 8Q3 4 5 6T9 1M3 9Q7 9 10 3" /></Line>
            <span>中</span>
            <Sogou $s={10}>S</Sogou>
          </TrayIcons>
          <TrayText $w={32} $after={7}>23:31<br />星期一</TrayText>
          <svg width="11" height="11" viewBox="0 0 11 11"><path d="M0 0H11V8H6L4 11V8H0Z" fill="#f5f5f5" /><path d="M2 3H9M2 5H9" stroke="#444" strokeWidth=".8" /></svg>
        </Tray>
      </Taskbar>

      <Player>
        <PlayerBar>
          <Line w={18} h={13} c="#d8dbe2" sw={1.2}><path d="M5 12H1V1H17V12H13M4 6Q9 2 14 6M6 8Q9 6 12 8" /><path d="M9 9L11 12H7Z" fill="#d8dbe2" /></Line>
          <PlayerName>iTools苹果录屏大师(AirPlayer)</PlayerName>
          <Fps>40fps</Fps>
          <WinButtons>
            <Line w={6} h={6} c="#e8e8ee" sw={1.4}><path d="M0 0H6" /></Line>
            <Line w={6} h={6} c="#e8e8ee" sw={1.2}><path d="M0 -1L6 5M6 -1L0 5" /></Line>
          </WinButtons>
        </PlayerBar>
        <NoteHead>
          <StatusRow>
            <StatusTime><span>下午 11:31</span><span>1月17日周一</span></StatusTime>
            <StatusIcons>
              <Line w={12} h={10} c="#9b45c4" sw={1}><circle cx="6" cy="5" r="4" strokeDasharray="1 1.500" /></Line>
              <Line w={14} h={10} c="#f5e8fb" sw={2}><path d="M1 4Q7 -2 13 4M4 7Q7 4 10 7" /></Line>
              <Line w={10} h={11} c="#e7cff4" sw={1.2}><path d="M1 1H9V8H1ZM3 10H8" /></Line>
              <Line w={13} h={12} c="#f5e8fb" sw={1.5}><circle cx="6" cy="6" r="5" /><circle cx="6" cy="6" r="1.800" /></Line>
              <span>83%</span>
              <svg width="18" height="10" viewBox="0 0 18 10"><rect width="18" height="10" rx="2.500" fill="#45d562" /><path d="M11 1L6 6H9L7 9L13 4H10Z" fill="#fff" /></svg>
            </StatusIcons>
          </StatusRow>
          <NavRow>
            <NavLeft>
              <Line w={22} h={24} c="#f3e3fb" sw={1.8}><circle cx="9.500" cy="11" r="7.800" /><path d="M15 17L21 22.500" /></Line>
              <Line w={20} h={24} c="#f3e3fb" sw={1.9}><path d="M1 2V12H10M1.500 11.500L8 4.500Q12 1 17 4.500Q21 9 17 13.500L8 23" /></Line>
              <Line w={20} h={24} c="#b55fdf" sw={1.7}><path d="M19 2V12H10M18.500 11.500L12 4.500Q8 1 3 4.500Q-1 9 3 13.500L12 23" /></Line>
            </NavLeft>
            <NavMid>
              <NoteTitle>最近的笔记</NoteTitle>
              <Tabs>
                <NoteTab $w={53}>开始</NoteTab>
                <NoteTab $w={63} $after={2}>插入</NoteTab>
                <NoteTab $w={49} $after={8} $active>绘图</NoteTab>
                <NoteTab $w={52}>视图</NoteTab>
              </Tabs>
            </NavMid>
            <NavRight>
              <Line w={22} h={23} c="#f3e3fb" sw={1.7}><path d="M8 3H4Q1 3 1 6V18Q1 21 4 21H15Q18 21 18 18V16M13 1.500L20.500 8L13 14V10.500Q8 10 5 14.500Q6 6 13 5Z" /></Line>
              <Line w={22} h={23} box="1 1 22 22" c="#f3e3fb" sw={1.7}><circle cx="12" cy="12" r="3" /><path d="M9.700 2H14.300L15 5L17 6.200L20 5.200L22.200 9L20 11V13L22.200 15L20 18.800L17 17.800L15 19L14.300 22H9.700L9 19L7 17.800L4 18.800L1.800 15L4 13V11L1.800 9L4 5.200L7 6.200L9 5Z" /></Line>
              <Line w={23} h={23} c="#f3e3fb" sw={1.7}><path d="M22 1L13 10M13 2V10H22M1 22L10 12.500M2 12.500H10V21" /></Line>
            </NavRight>
          </NavRow>
        </NoteHead>
        <DrawBar>
          <Mode $before={89} $w={104} $gap={12}><LetterA>A</LetterA>文本模式</Mode>
          <Mode $w={114} $on $pad={13} $gap={10}>
            <Line w={23} h={24} c="#666" sw={1.5}><path d="M8 19Q0 22 0 15Q0 9 6 9Q10 8 11 3Q15 -2 20 3Q23 8 18 11Q15 13 14 17" strokeDasharray=".1 3" /><path d="M18 15V22M14.500 18.500H21.500" stroke="#4191d8" /></Line>套索选择
          </Mode>
          <Mode $before={14} $w={112} $gap={8}>
            <Line w={29} h={30} c="#333" sw={1}><path d="M0 14.500H29M0 17.500H29" /><path d="M14.500 12V2M11 5L14.500 1.500L18 5M14.500 20V30.500M11 27L14.500 30.500L18 27" stroke="#3ea08e" strokeWidth="1.400" /></Line>插入空格
          </Mode>
          <Divider $before={-1} $after={20} />
          <Eraser />
          <Divider $before={20} $after={17.5} />
          <Pens>{penList.map((p, i) => <Pen key={i} {...p} />)}</Pens>
          <Mode $before={27} $w={22}><Line w={21} h={21} c="#151515" sw={1.7}><path d="M10.500 0V21M0 10.500H21" /></Line></Mode>
          <Divider $before={19} $after={17} />
          <Actions>
            <svg width="26" height="28" viewBox="0 0 26 28"><circle cx="8" cy="12" r="7.300" fill="none" stroke="#444" strokeWidth="1.200" /><path d="M11 11H25V25H11Z" fill="#4591da" stroke="#fff" /></svg>
            <Line w={28} h={28} c="#5e9ccf" sw={1.3}><path d="M2 3H21M3 0V6M20 0V6" stroke="#444" /><path d="M12 13H27V27H12ZM6 11Q0 13 1 18Q2 24 10 23M7 20L10.500 23L7 26" /></Line>
            <Line w={25} h={28} c="#5e9ccf" sw={1.2}><path d="M3 10L8 3Q15 1 18 8L23 16M3 13Q8 19 18 22M8 7Q5 14 12 13Q15 11 13 7" /><path d="M1 12L21 2.500" stroke="#111" strokeWidth="2" /></Line>
          </Actions>
        </DrawBar>
        <Page><Notebook /></Page>
      </Player>

      <FormulaWindow><Formula /></FormulaWindow>
      <Reminder><Line w={24} h={24} c="#fff" sw={2.2}><circle cx="13" cy="12" r="10.500" fill="#fff" /><path d="M1 4L4 1M2 22L5 19" /><path d="M13 5V12L18 16" stroke="#87cdd8" /></Line></Reminder>
      <Watermark>老弓的学习日记<Bili>bilibili</Bili></Watermark>
      <Ime>
        <Sogou $s={17} $after={2}>S</Sogou>
        <ImeCell>中</ImeCell>
        <ImeCell>•,</ImeCell>
        <ImeCell><Line w={11} h={11} c="#2474bd" sw={1.2}><circle cx="5.500" cy="5.500" r="4.800" /><path d="M3 6Q5.500 10 8 6M4 3.500V4M7 3.500V4" /></Line></ImeCell>
        <ImeCell><Line w={9} h={11} c="#2474bd" sw={1.2}><path d="M3 1H6V6H3Z" fill="#2474bd" /><path d="M1 5Q1 8 4.500 8T8 5M4.500 8V11" /></Line></ImeCell>
        <ImeCell><Line w={11} h={9} c="#2474bd" sw={1}><path d="M0 1H11V8H0ZM2 3H9M2 5H9" /></Line></ImeCell>
        <ImeCell><Line w={10} h={10} c="#b5b8bb" sw={1}><circle cx="4" cy="2.500" r="2" /><path d="M1 9V7Q4 4 6 6M6 6H10V9H5Z" /></Line></ImeCell>
        <ImeCell><svg width="10" height="10" viewBox="0 0 10 10"><path d="M0 2L3 0H7L10 2L9 4H8V10H2V4H1Z" fill="#2474bd" /></svg></ImeCell>
        <ImeCell><svg width="9" height="9" viewBox="0 0 9 9"><path d="M0 0H4V4H0ZM5 0H9V4H5ZM0 5H4V9H0ZM5 5H9V9H5Z" fill="#2474bd" /></svg></ImeCell>
      </Ime>
    </Desktop>
  );
}
